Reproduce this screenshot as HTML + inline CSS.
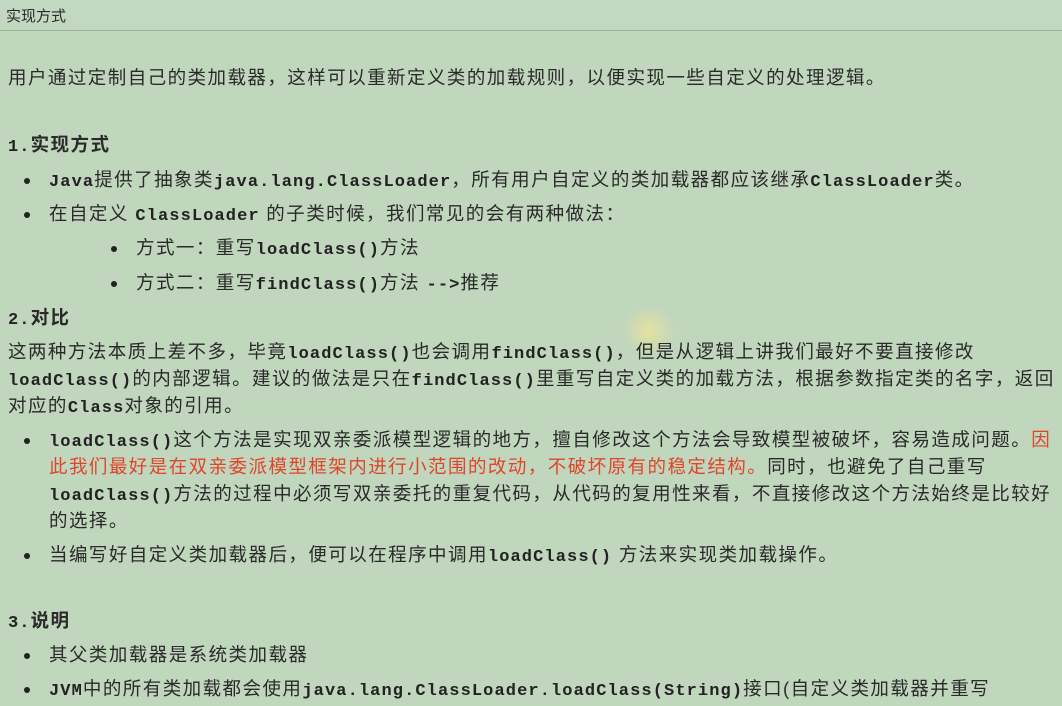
<!DOCTYPE html>
<html><head><meta charset="utf-8"><style>
html,body{margin:0;padding:0}
body{width:1062px;height:706px;overflow:hidden;background:#c0d6bd;position:relative;font-family:"Liberation Sans","Noto Sans CJK SC",sans-serif;color:#2a2a2a}
.top{position:absolute;left:0;top:0;width:1062px;height:30px;border-bottom:1px solid #9fb49d;background:#c3d8c0}
.top span{position:absolute;left:6px;top:5px;font-size:15px}
.l{position:absolute;white-space:nowrap;font-size:18.5px;letter-spacing:1.45px;line-height:26px;transform:translateY(-13px)}
code{font-family:"Liberation Mono",monospace;font-size:17px;letter-spacing:1.1px;font-weight:bold;color:#222}
.h{font-weight:bold}
.r{color:#e0452c}
.d{position:absolute;width:6px;height:6px;border-radius:50%;background:#222;transform:translate(-3px,-3px)}
.cur{position:absolute;left:622px;top:304px;width:54px;height:54px;border-radius:50%;background:radial-gradient(circle,rgba(240,230,150,.75),rgba(240,230,150,0) 70%)}
</style></head><body>
<div class="top"><span>实现方式</span></div>
<div class="cur"></div>
<div class="l" style="left:8px;top:78px">用户通过定制自己的类加载器，这样可以重新定义类的加载规则，以便实现一些自定义的处理逻辑。</div>
<div class="l h" style="left:8px;top:145px"><code>1.</code>实现方式</div>
<div class="d" style="left:27px;top:181px"></div>
<div class="l" style="left:49px;top:180px"><code>Java</code>提供了抽象类<code>java.lang.ClassLoader</code>，所有用户自定义的类加载器都应该继承<code>ClassLoader</code>类。</div>
<div class="d" style="left:27px;top:215px"></div>
<div class="l" style="left:49px;top:214px">在自定义 <code>ClassLoader</code> 的子类时候，我们常见的会有两种做法：</div>
<div class="d" style="left:114px;top:249px"></div>
<div class="l" style="left:136px;top:248px">方式一：重写<code>loadClass()</code>方法</div>
<div class="d" style="left:114px;top:284px"></div>
<div class="l" style="left:136px;top:283px">方式二：重写<code>findClass()</code>方法 <code>--&gt;</code>推荐</div>
<div class="l h" style="left:8px;top:318px"><code>2.</code>对比</div>
<div class="l" style="left:8px;top:352px">这两种方法本质上差不多，毕竟<code>loadClass()</code>也会调用<code>findClass()</code>，但是从逻辑上讲我们最好不要直接修改</div>
<div class="l" style="left:8px;top:379px"><code>loadClass()</code>的内部逻辑。建议的做法是只在<code>findClass()</code>里重写自定义类的加载方法，根据参数指定类的名字，返回</div>
<div class="l" style="left:8px;top:406px">对应的<code>Class</code>对象的引用。</div>
<div class="d" style="left:27px;top:441px"></div>
<div class="l" style="left:49px;top:440px"><code>loadClass()</code>这个方法是实现双亲委派模型逻辑的地方，擅自修改这个方法会导致模型被破坏，容易造成问题。<span class="r">因</span></div>
<div class="l" style="left:49px;top:467px"><span class="r">此我们最好是在双亲委派模型框架内进行小范围的改动，不破坏原有的稳定结构。</span>同时，也避免了自己重写</div>
<div class="l" style="left:49px;top:494px"><code>loadClass()</code>方法的过程中必须写双亲委托的重复代码，从代码的复用性来看，不直接修改这个方法始终是比较好</div>
<div class="l" style="left:49px;top:521px">的选择。</div>
<div class="d" style="left:27px;top:556px"></div>
<div class="l" style="left:49px;top:555px">当编写好自定义类加载器后，便可以在程序中调用<code>loadClass()</code> 方法来实现类加载操作。</div>
<div class="l h" style="left:8px;top:621px"><code>3.</code>说明</div>
<div class="d" style="left:27px;top:656px"></div>
<div class="l" style="left:49px;top:655px">其父类加载器是系统类加载器</div>
<div class="d" style="left:27px;top:690px"></div>
<div class="l" style="left:49px;top:689px"><code>JVM</code>中的所有类加载都会使用<code>java.lang.ClassLoader.loadClass(String)</code>接口(自定义类加载器并重写</div>
</body></html>
